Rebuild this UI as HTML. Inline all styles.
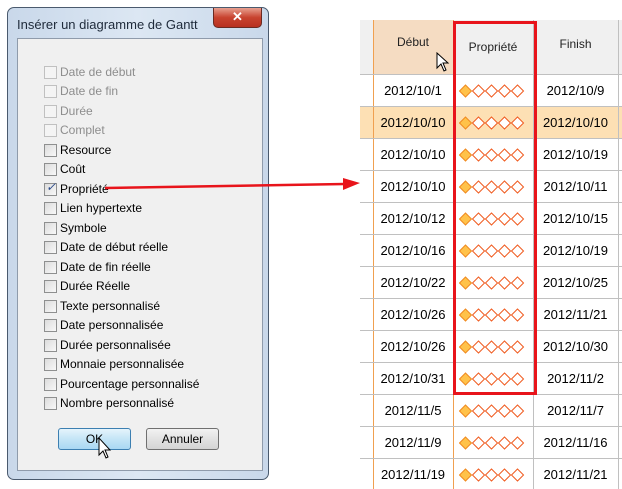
<!DOCTYPE html>
<html><head><meta charset="utf-8"><style>
*{margin:0;padding:0;box-sizing:border-box}
body{width:622px;height:489px;background:#fff;position:relative;overflow:hidden;font-family:"Liberation Sans",sans-serif}
.dlg{position:absolute;left:7px;top:7px;width:262px;height:473px;border:1px solid #4a5a6e;border-radius:7px;background:linear-gradient(90deg,#c9d8ea,#dce7f3 50%,#c9d8ea)}
.title{position:absolute;left:9px;top:9px;font-size:13px;color:#1e2a3a}
.close{position:absolute;left:205px;top:0;width:49px;height:20px;border:1px solid #6a2a22;border-top:none;border-radius:0 0 5px 5px;background:linear-gradient(#e8a090,#c8432f 50%,#b83020);color:#fff;font-size:13px;font-weight:bold;text-align:center;line-height:18px}
.inner{position:absolute;left:9px;top:30px;width:246px;height:433px;background:#f0f0f0;border:1px solid #8f9bab}
.cb{position:absolute;left:26px;font-size:12px;color:#000;height:14px;line-height:13px;white-space:nowrap}
.cb i{display:inline-block;width:13px;height:13px;border:1px solid #8e8f8f;background:linear-gradient(135deg,#dcdcdc,#f8f8f8);vertical-align:top;margin-right:3px;position:relative}
.cb.d{color:#8d8d8d}.cb.d i{border-color:#c0c0c0;background:#f4f4f4}
.btn{position:absolute;top:389px;width:73px;height:22px;border:1px solid #707070;border-radius:3px;background:linear-gradient(#f2f2f2,#e2e2e2 50%,#d4d4d4);font-size:12px;text-align:center;line-height:20px}
.hl{position:absolute;height:1px;background:#c0c0c0;left:360px;width:262px}
.vl{position:absolute;width:1px;top:20px;height:469px}
.cell{position:absolute;font-size:13px;text-align:center;color:#000}
.dm{position:absolute;left:459px;width:70px;height:14px}
</style></head><body>
<div class="dlg">
<div class="title">Insérer un diagramme de Gantt</div>
<div class="close">✕</div>
<div class="inner">
<div class="cb d" style="top:27px"><i></i>Date de début</div>
<div class="cb d" style="top:46px"><i></i>Date de fin</div>
<div class="cb d" style="top:66px"><i></i>Durée</div>
<div class="cb d" style="top:85px"><i></i>Complet</div>
<div class="cb" style="top:105px"><i></i>Resource</div>
<div class="cb" style="top:124px"><i></i>Coût</div>
<div class="cb" style="top:144px"><i><span style="position:absolute;left:1px;top:-3px;color:#2a4a8a;font-size:12px">✓</span></i>Propriété</div>
<div class="cb" style="top:163px"><i></i>Lien hypertexte</div>
<div class="cb" style="top:183px"><i></i>Symbole</div>
<div class="cb" style="top:202px"><i></i>Date de début réelle</div>
<div class="cb" style="top:222px"><i></i>Date de fin réelle</div>
<div class="cb" style="top:241px"><i></i>Durée Réelle</div>
<div class="cb" style="top:261px"><i></i>Texte personnalisé</div>
<div class="cb" style="top:280px"><i></i>Date personnalisée</div>
<div class="cb" style="top:300px"><i></i>Durée personnalisée</div>
<div class="cb" style="top:319px"><i></i>Monnaie personnalisée</div>
<div class="cb" style="top:339px"><i></i>Pourcentage personnalisé</div>
<div class="cb" style="top:358px"><i></i>Nombre personnalisé</div>
<div class="btn" style="left:40px;border-color:#3c7fb1;background:linear-gradient(#e5f4fc,#c4e5f6 50%,#a9d8f3)">OK</div>
<div class="btn" style="left:128px">Annuler</div>
</div>
</div>
<svg style="position:absolute;left:95px;top:428px" width="20" height="40"><path d="M4 10 L4 27 L8 23 L11 30 L13 29 L10 22 L15 22 Z" fill="#fff" stroke="#000" stroke-width="1"/></svg>

<div style="position:absolute;left:360px;top:20px;width:262px;height:54px;background:#f0f0f0"></div>
<div style="position:absolute;left:373px;top:20px;width:80px;height:54px;background:#f5dcc2"></div>
<div style="position:absolute;left:360px;top:107px;width:262px;height:31px;background:#fde0b4"></div>
<div class="vl" style="left:373px;background:#f0a050"></div>
<div class="vl" style="left:453px;background:#f0a050"></div>
<div class="vl" style="left:533px;background:#c0c0c0"></div>
<div class="vl" style="left:618px;background:#c0c0c0"></div>
<div class="hl" style="top:74px"></div><div class="hl" style="top:106px"></div><div class="hl" style="top:138px"></div><div class="hl" style="top:170px"></div><div class="hl" style="top:202px"></div><div class="hl" style="top:234px"></div><div class="hl" style="top:266px"></div><div class="hl" style="top:298px"></div><div class="hl" style="top:330px"></div><div class="hl" style="top:362px"></div><div class="hl" style="top:394px"></div><div class="hl" style="top:426px"></div><div class="hl" style="top:458px"></div>
<div class="cell" style="left:373px;width:80px;top:35px;font-size:12px;color:#222">Début</div>
<div class="cell" style="left:453px;width:80px;top:40px;font-size:12px;color:#222">Propriété</div>
<div class="cell" style="left:533px;width:85px;top:37px;font-size:12px;color:#222">Finish</div>
<svg style="position:absolute;left:436px;top:52px" width="16" height="22"><path d="M1 1 L1 16 L5 12 L8 19 L10 18 L7 11 L12 11 Z" fill="#fff" stroke="#000"/></svg>
<div id="rows"></div>
<div style="position:absolute;left:453px;top:21px;width:84px;height:374px;border:3px solid #e8141b"></div>
<svg style="position:absolute;left:0;top:0" width="622" height="489"><path d="M105 188 L345 184" stroke="#e8141b" stroke-width="2.5"/><path d="M343 178 L360 183 L343 190 Z" fill="#e8141b"/></svg>
<script>
var d=[["2012/10/1","2012/10/9"],["2012/10/10","2012/10/10"],["2012/10/10","2012/10/19"],["2012/10/10","2012/10/11"],["2012/10/12","2012/10/15"],["2012/10/16","2012/10/19"],["2012/10/22","2012/10/25"],["2012/10/26","2012/11/21"],["2012/10/26","2012/10/30"],["2012/10/31","2012/11/2"],["2012/11/5","2012/11/7"],["2012/11/9","2012/11/16"],["2012/11/19","2012/11/21"]];
var h="";
d.forEach(function(r,i){var y=74+32*i;
h+='<div class="cell" style="left:373px;width:80px;top:'+(y+9)+'px">'+r[0]+'</div><div class="cell" style="left:533px;width:85px;top:'+(y+9)+'px">'+r[1]+'</div>';
var s='<svg class="dm" style="top:'+(y+10)+'px" viewBox="0 0 70 14">';
for(var k=0;k<5;k++){var x=k*13+6.5;s+='<path d="M'+x+' 1 L'+(x+6)+' 7 L'+x+' 13 L'+(x-6)+' 7 Z" fill="'+(k?'#fff':'#ffc24a')+'" stroke="'+(k?'#f05a1e':'#f08a20')+'" stroke-width="1"/>';}
h+=s+'</svg>';});
document.getElementById("rows").innerHTML=h;
</script>
</body></html>
